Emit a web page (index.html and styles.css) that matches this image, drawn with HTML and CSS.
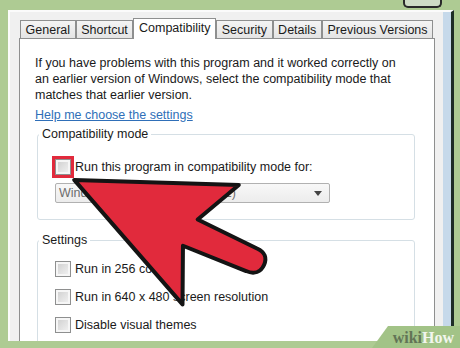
FILE: index.html
```html
<!DOCTYPE html>
<html lang="en">
  <head>
    <meta charset="UTF-8" />
    <meta name="viewport" content="width=device-width, initial-scale=1.0" />
    <title>Compatibility</title>
    <link rel="stylesheet" href="styles.css">
  </head>
  <body>
    <div class="title-btn"></div>
    <div class="window">
      <div class="tabs">
        <div class="tab">General</div>
        <div class="tab">Shortcut</div>
        <div class="tab active">Compatibility</div>
        <div class="tab">Security</div>
        <div class="tab">Details</div>
        <div class="tab">Previous Versions</div>
      </div>
      <div class="panel">
        <p class="intro">If you have problems with this program and it worked correctly on an earlier version of Windows, select the compatibility mode that matches that earlier version.</p>
        <a class="help">Help me choose the settings</a>

        <fieldset class="group compat">
          <legend>Compatibility mode</legend>
          <div class="check"><span class="box marked"></span>Run this program in compatibility mode for:</div>
          <div class="select">
            <span class="value">Windows Vista (Service Pack 2)</span>
            <span class="caret"></span>
          </div>
        </fieldset>

        <fieldset class="group settings">
          <legend>Settings</legend>
          <div class="check"><span class="box"></span>Run in 256 colors</div>
          <div class="check"><span class="box"></span>Run in 640 x 480 screen resolution</div>
          <div class="check"><span class="box"></span>Disable visual themes</div>
        </fieldset>
      </div>
    </div>

    <!-- red pointer arrow -->
    <svg class="arrow" width="460" height="348" viewBox="0 0 460 348">
      <g transform="translate(70 177) rotate(23.5)">
        <path d="M5,1 L158,-60 L134,-12 L200,-9 C209,-9 213,-4 213,3 C213,11 208,16 199,16 L131,18 L154,72 Z"
              fill="#e12a3c" stroke="#141414" stroke-width="4" stroke-linejoin="round" />
      </g>
    </svg>

    <div class="watermark"><span class="wiki">wiki</span><span class="how">How</span></div>
  </body>
</html>
```

FILE: styles.css
```css
* {
  margin: 0;
  padding: 0;
  box-sizing: border-box;
}
body {
  width: 460px;
  height: 348px;
  overflow: hidden;
  position: relative;
  background: #aecb93;
  font-family: "Liberation Sans", Arial, sans-serif;
  font-size: 12.5px;
  color: #1a1a1a;
}
.title-btn {
  position: absolute;
  left: 403px;
  top: 0;
  width: 39px;
  height: 8px;
  background: #cfdcc6;
  border: 2px solid #2a2a2a;
  border-top: none;
  border-radius: 0 0 5px 5px;
}
.window {
  margin: 10px 0 0 8px;
  width: 446px;
  height: 331px;
  overflow: hidden;
  background: #f0f0f0;
  border-left: 2px solid #fbfbfb;
  border-top: 2px solid #fbfbfb;
  border-right: 3px solid #1e2d26;
  box-shadow: inset -8px 0 0 #c6d9ea;
  padding: 6px 16px 0 9px;
}
.tabs {
  display: flex;
  align-items: flex-end;
  padding-left: 1px;
}
.tab {
  height: 18px;
  padding: 2px 4.6px 0;
  line-height: 15px;
  border: 1px solid #8e8f8f;
  border-bottom: none;
  background: linear-gradient(#f4f4f4, #e4e4e4);
  white-space: nowrap;
}
.tab.active {
  height: 21px;
  margin-bottom: -1px;
  padding-top: 2px;
  position: relative;
  z-index: 1;
  background: #fff;
}
.panel {
  width: 416px;
  height: 320px;
  background: #fff;
  border: 1px solid #8e8f8f;
  padding: 16px 19px 0 15px;
  line-height: 16px;
}
.intro {
  max-width: 370px;
}
.help {
  display: block;
  margin-top: 4px;
  color: #2f6fb8;
  text-decoration: underline;
}
.group {
  margin: 3px 0 0 2px;
  border: 1px solid #d5dfe5;
  border-radius: 3px;
  padding: 0 0 0 17px;
}
.group legend {
  margin-left: -16px;
  padding: 0 3px;
  line-height: 16px;
}
.compat {
  padding-top: 17px;
  padding-bottom: 16px;
}
.settings {
  margin-top: 12px;
  padding-top: 13px;
  padding-bottom: 20px;
}
.check {
  display: flex;
  align-items: center;
  gap: 4px;
  height: 16px;
  white-space: nowrap;
}
.settings .check + .check {
  margin-top: 12px;
}
.box {
  width: 16px;
  height: 16px;
  flex: 0 0 16px;
  border: 1px solid #8e8f8f;
  box-shadow: inset 0 0 0 2px #f6f6f6;
  background: linear-gradient(135deg, #cdcdcd, #f4f4f4);
}
.box.marked {
  outline: 3px solid #e12a3c;
}
.select {
  display: flex;
  align-items: center;
  justify-content: space-between;
  width: 275px;
  height: 20px;
  margin-top: 8px;
  padding: 0 7px 0 3px;
  border: 1px solid #b1b1b1;
  border-radius: 2px;
  background: linear-gradient(#f8f8f8, #ececec);
  color: #6d6d6d;
}
.caret {
  width: 0;
  height: 0;
  border-left: 4px solid transparent;
  border-right: 4px solid transparent;
  border-top: 5px solid #444;
}
.arrow {
  position: absolute;
  left: 0;
  top: 0;
}
.watermark {
  position: absolute;
  right: 0;
  bottom: 0;
  width: 88px;
  height: 22px;
  padding: 2px 6px 0 0;
  text-align: right;
  background: #a2c387;
  clip-path: polygon(16px 0, 100% 0, 100% 100%, 0 100%);
  font-family: "Liberation Serif", "DejaVu Serif", serif;
  font-weight: bold;
  font-size: 16px;
  line-height: 20px;
}
.wiki {
  color: #627456;
}
.how {
  color: #f2f6ee;
}
```
